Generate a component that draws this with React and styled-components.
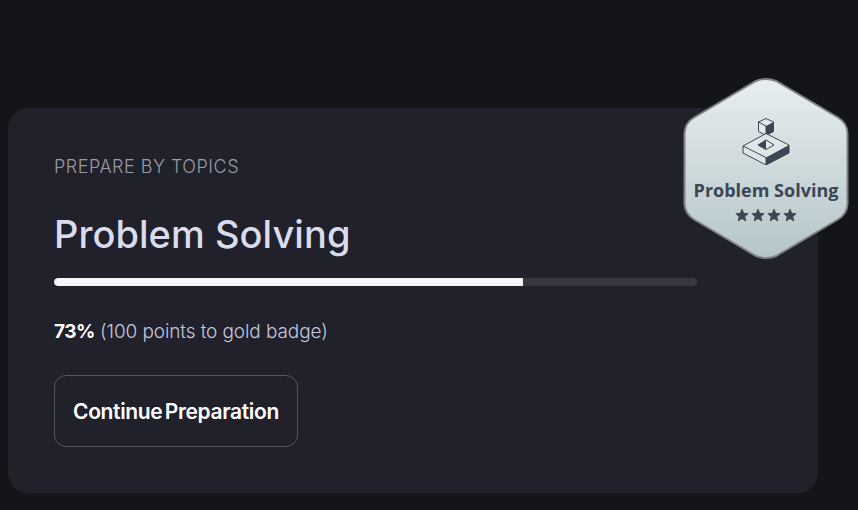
import React from 'react';
import styled, { createGlobalStyle } from 'styled-components';

const GlobalStyle = createGlobalStyle`
  html, body {
    margin: 0;
    padding: 0;
    background: #141519;
  }
`;

const Page = styled.div`
  box-sizing: border-box;
  width: 858px;
  height: 510px;
  padding: 108px 40px 17px 8px;
  overflow: hidden;
  font-family: "Inter", "Liberation Sans", sans-serif;
`;

const Card = styled.section`
  position: relative;
  box-sizing: border-box;
  height: 385px;
  padding: 49px 46px 0;
  background: #20212b;
  border-radius: 20px;
`;

const Eyebrow = styled.div`
  font-size: 18px;
  line-height: 20px;
  font-weight: 300;
  color: #9a9ba3;
  letter-spacing: 0.5px;
`;

const Title = styled.h1`
  margin: 35px 0 0;
  font-size: 38px;
  line-height: 44px;
  font-weight: 500;
  color: #d8dcec;
  letter-spacing: 0.05px;
`;

const Track = styled.div`
  width: 643px;
  height: 8px;
  margin-top: 22px;
  background: #363741;
  border-radius: 4px;
  overflow: hidden;
`;

const Fill = styled.div`
  height: 100%;
  background: #f7f8fc;
  border-radius: 4px 0 0 4px;
`;

const Progress = styled.p`
  margin: 34px 0 0;
  font-size: 19px;
  line-height: 24px;
  font-weight: 300;
  color: #c3c8dc;
  letter-spacing: -0.1px;

  strong {
    font-weight: 700;
    color: #ffffff;
    letter-spacing: -0.5px;
  }
`;

const ActionButton = styled.button`
  display: block;
  box-sizing: border-box;
  width: 244px;
  height: 72px;
  margin-top: 31px;
  padding: 0;
  background: transparent;
  border: 1px solid #55565f;
  border-radius: 12px;
  color: #ffffff;
  font-family: inherit;
  font-size: 21px;
  font-weight: 600;
  letter-spacing: -0.35px;
  word-spacing: -2.5px;
  cursor: pointer;
`;

const Badge = styled.div`
  position: absolute;
  top: -31px;
  right: -31px;
  width: 166px;
  height: 183px;
  display: flex;
  flex-direction: column;
  align-items: center;
`;

const BadgeShape = styled.svg`
  position: absolute;
  inset: 0;
`;

const BadgeIcon = styled.svg`
  position: relative;
  margin-top: 40px;
`;

const BadgeLabel = styled.div`
  position: relative;
  margin-top: 14px;
  font-family: "Open Sans", "Noto Sans", sans-serif;
  font-size: 18px;
  line-height: 22px;
  font-weight: 700;
  color: #3b4554;
  white-space: nowrap;
`;

const Stars = styled.div`
  position: relative;
  display: flex;
  gap: 2px;
  margin-top: 7px;
`;

const HEX = 'M73 4Q83 0 93 4L155 40.5Q164 46 164.5 56L164.5 127Q164 137 155 142.5L93 179Q83 183 73 179L11 142.5Q2 137 1.5 127L1.5 56Q2 46 11 40.5Z';

const Star = () => (
  <svg width="14" height="14" viewBox="0 0 24 24" fill="#3b4554" stroke="#3b4554" strokeWidth="1.5" strokeLinejoin="round">
    <path d="M12 2l3 7 7.5.7-5.7 5 1.8 7.4L12 18.2 5.4 22.1l1.8-7.4-5.7-5L9 9z" />
  </svg>
);

const App = () => {
  const percent = 73;

  return (
    <>
      <GlobalStyle />
      <Page>
        <Card>
          <Eyebrow>PREPARE BY TOPICS</Eyebrow>
          <Title>Problem Solving</Title>
          <Track>
            <Fill style={{ width: `${percent}%` }} />
          </Track>
          <Progress>
            <strong>{percent}%</strong> (100 points to gold badge)
          </Progress>
          <ActionButton>Continue Preparation</ActionButton>

          <Badge>
            <BadgeShape width="166" height="183" viewBox="0 0 166 183">
              <defs>
                <linearGradient id="badgeFill" x1="0" y1="0" x2="0" y2="1">
                  <stop offset="0" stopColor="#e8eeef" />
                  <stop offset="1" stopColor="#b4c5c9" />
                </linearGradient>
              </defs>
              <path d={HEX} fill="url(#badgeFill)" stroke="#7f8183" strokeWidth="2" />
            </BadgeShape>

            <BadgeIcon width="48" height="48" viewBox="0 0 48 48">
              {/* small cube */}
              <path d="M24 1.5l7.5 3.5v9.5L24 18.5 16.5 14.5V5z" fill="#e4eaeb" stroke="#3b4554" strokeWidth="1" strokeLinejoin="round" />
              <path d="M24 9l7.5-4v9.5L24 18.5z" fill="#3b4554" />
              <path d="M16.5 5L24 9v9.5" fill="none" stroke="#3b4554" strokeWidth="1" />
              {/* base slab */}
              <path d="M1 29L24 16.5 47 28v8L24 48 1 36z" fill="#dfe6e8" stroke="#3b4554" strokeWidth="1" strokeLinejoin="round" />
              <path d="M24 40.5L47 28v8L24 48z" fill="#3b4554" />
              <path d="M1 29l23 11.5V48" fill="none" stroke="#3b4554" strokeWidth="1" />
              {/* hole */}
              <path d="M16 28l8-5 8 5-8 4.5z" fill="#e4eaeb" stroke="#3b4554" strokeWidth="1" />
              <path d="M16 28l8-5v9.5z" fill="#3b4554" />
            </BadgeIcon>

            <BadgeLabel>Problem Solving</BadgeLabel>
            <Stars>
              <Star />
              <Star />
              <Star />
              <Star />
            </Stars>
          </Badge>
        </Card>
      </Page>
    </>
  );
};

export default App;
